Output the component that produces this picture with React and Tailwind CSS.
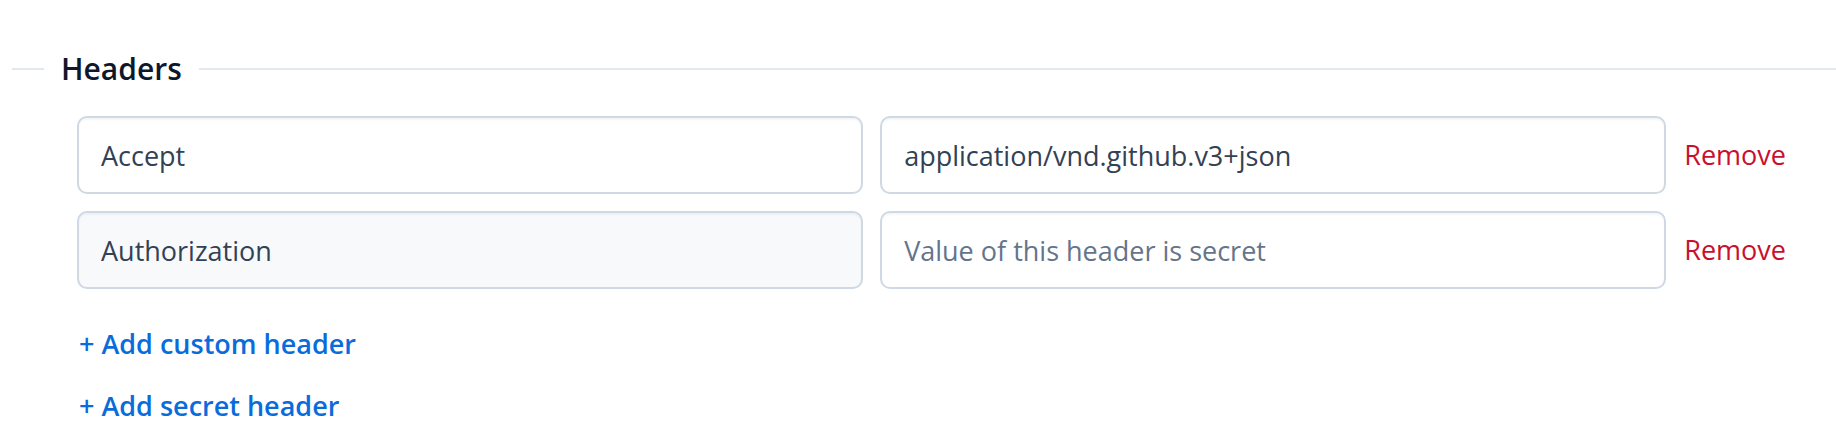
import React from "react";

const inputCls =
  "h-[78px] w-full rounded-[10px] border-2 border-[#cfd9e3] px-[22px] text-[27px] text-[#334155] shadow-[inset_0_2px_2px_rgba(15,23,42,0.04)] outline-none";

export default function App() {
  return (
    <div className="w-[1836px] h-[432px] bg-white font-['Open_Sans','Noto_Sans',sans-serif]">
      <div className="pt-[47px] pl-[12px]">
        <div className="flex items-center h-[44px]">
          <div className="w-[32px] h-[2px] bg-[#e2e8f0]" />
          <div className="px-[17px] text-[30px] font-semibold text-[#0f172a] leading-none">Headers</div>
          <div className="flex-1 h-[2px] bg-[#e2e8f0]" />
        </div>
        <div className="pl-[65px] pr-[50px] pt-[25px]">
          <div className="grid grid-cols-[1fr_1fr_auto] gap-x-[17px] gap-y-[17px] items-center">
            <input readOnly value="Accept" className={inputCls + " bg-white"} />
            <input readOnly value="application/vnd.github.v3+json" className={inputCls + " bg-white"} />
            <button className="text-[27px] font-medium text-[#c8102e] ml-[1px] text-left">Remove</button>
            <input readOnly value="Authorization" className={inputCls + " bg-[#f7f9fb]"} />
            <input
              readOnly
              placeholder="Value of this header is secret"
              className={inputCls + " bg-white placeholder:text-[#64748b]"}
            />
            <button className="text-[27px] font-medium text-[#c8102e] ml-[1px] text-left">Remove</button>
          </div>
          <div className="flex flex-col items-start gap-[22px] pt-[35px] pl-[2px]">
            <button className="text-[27px] font-semibold text-[#0a6cdb] leading-[40px]">+ Add custom header</button>
            <button className="text-[27px] font-semibold text-[#0a6cdb] leading-[40px]">+ Add secret header</button>
          </div>
        </div>
      </div>
    </div>
  );
}
